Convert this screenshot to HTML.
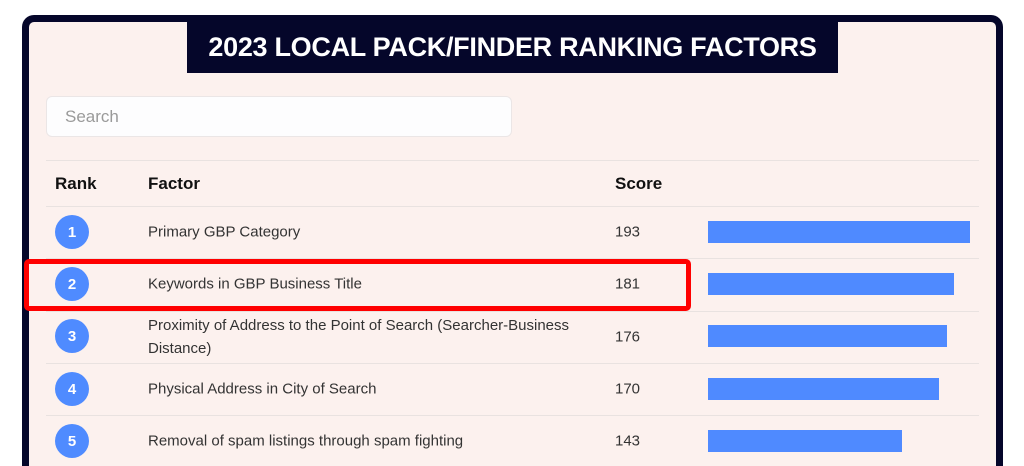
<!DOCTYPE html>
<html><head><style>
*{margin:0;padding:0;box-sizing:border-box}
html,body{width:1024px;height:466px;overflow:hidden}
body{background:#fff;position:relative;font-family:"Liberation Sans",sans-serif}
.frame{position:absolute;left:22px;top:15px;width:981px;height:451px;border:7px solid #05062a;border-bottom:0;border-radius:12px 12px 0 0;background:#fcf1ee}
.hdr{position:absolute;left:187px;top:22px;width:651px;height:51px;background:#05062a;color:#fff;font-weight:bold;font-size:27px;text-align:center;line-height:51px;letter-spacing:-0.3px}
.search{position:absolute;left:46px;top:96px;width:466px;height:41px;background:#fdfdfe;border:1px solid #ebe6e6;border-radius:6px;color:#9a9a9a;font-size:17px;line-height:39px;padding-left:18px}
.line{position:absolute;left:46px;width:933px;height:1px;background:#e9e2e0}
.t{position:absolute;font-size:15px;color:#333;transform:translateY(-50%)}
.h{font-weight:bold;font-size:17px;color:#111}
.c{position:absolute;left:55px;width:34px;height:34px;border-radius:50%;background:#4f8bff;color:#fff;font-weight:bold;font-size:15px;text-align:center;line-height:35px}
.bar{position:absolute;left:708px;height:22px;background:#4f8aff}
.red{position:absolute;left:24px;top:259px;width:667px;height:52px;border:5px solid #f00;border-radius:5px}
</style></head><body>
<div class="frame"></div>
<div class="hdr">2023 LOCAL PACK/FINDER RANKING FACTORS</div>
<div class="search">Search</div>
<div class="line" style="top:160px"></div>
<div class="line" style="top:206px"></div>
<div class="line" style="top:258px"></div>
<div class="line" style="top:311px"></div>
<div class="line" style="top:363px"></div>
<div class="line" style="top:415px"></div>
<div class="t h" style="left:55px;top:184px">Rank</div>
<div class="t h" style="left:148px;top:184px">Factor</div>
<div class="t h" style="left:615px;top:184px">Score</div>

<div class="c" style="top:215px">1</div>
<div class="t" style="left:148px;top:232px">Primary GBP Category</div>
<div class="t" style="left:615px;top:232px">193</div>
<div class="bar" style="top:221px;width:262px"></div>

<div class="c" style="top:267px">2</div>
<div class="t" style="left:148px;top:284px">Keywords in GBP Business Title</div>
<div class="t" style="left:615px;top:284px">181</div>
<div class="bar" style="top:273px;width:246px"></div>

<div class="c" style="top:319px">3</div>
<div class="t" style="left:148px;top:337px;line-height:23px">Proximity of Address to the Point of Search (Searcher-Business<br>Distance)</div>
<div class="t" style="left:615px;top:337px">176</div>
<div class="bar" style="top:325px;width:239px"></div>

<div class="c" style="top:372px">4</div>
<div class="t" style="left:148px;top:389px">Physical Address in City of Search</div>
<div class="t" style="left:615px;top:389px">170</div>
<div class="bar" style="top:378px;width:231px"></div>

<div class="c" style="top:424px">5</div>
<div class="t" style="left:148px;top:441px">Removal of spam listings through spam fighting</div>
<div class="t" style="left:615px;top:441px">143</div>
<div class="bar" style="top:430px;width:194px"></div>

<div class="red"></div>
</body></html>
